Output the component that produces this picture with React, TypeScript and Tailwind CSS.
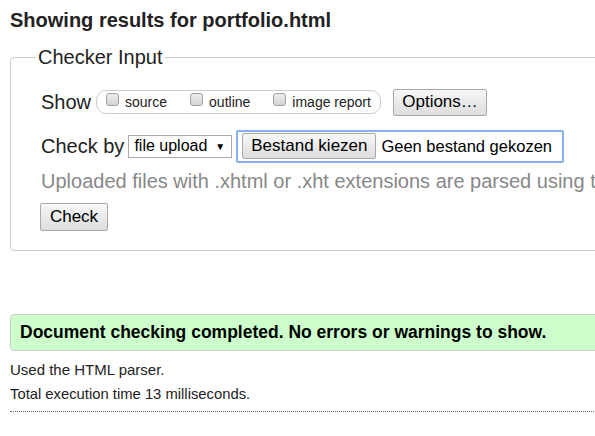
import React from "react";

function Box() {
  return (
    <span className="inline-block w-[13px] h-[13px] rounded-[3px] border border-[#a0a0a0] bg-gradient-to-b from-[#eeeeee] to-[#d4d4d4] mt-[-6px]" />
  );
}

function Btn({ children, cls }: { children: React.ReactNode; cls: string }) {
  return (
    <span
      className={
        "inline-flex items-center justify-center border border-[#a9a9a9] rounded-[2px] bg-gradient-to-b from-[#f8f8f8] to-[#dddddd] text-[17px] text-black " +
        cls
      }
    >
      {children}
    </span>
  );
}

export default function App() {
  return (
    <div
      className="w-[595px] h-[436px] overflow-hidden bg-white text-[#222]"
      style={{ fontFamily: '"Liberation Sans", Arial, sans-serif' }}
    >
      <div className="w-[1000px] pl-[10px]">
        <h2 className="mt-[8px] text-[20px] leading-[24px] font-bold text-[#222]">
          Showing results for portfolio.html
        </h2>
        <fieldset className="mt-[13px] w-[900px] border border-[#cccccc] rounded-[4px]">
          <legend className="ml-[25px] px-[2px] text-[20px] leading-[24px] text-[#222]">
            Checker Input
          </legend>
          <div className="pl-[30px] pt-[16px] pb-[19px]">
            <div className="h-[34px] flex items-center">
              <span className="text-[20px] mr-[5px]">Show</span>
              <span className="h-[24px] w-[285px] border border-[#cccccc] rounded-[10px] flex items-center pl-[9px] text-[14px]">
                <span className="flex items-center">
                  <Box />
                  <span className="ml-[6px] mr-[23px]">source</span>
                </span>
                <span className="flex items-center">
                  <Box />
                  <span className="ml-[6px] mr-[23px]">outline</span>
                </span>
                <span className="flex items-center">
                  <Box />
                  <span className="ml-[6px]">image report</span>
                </span>
              </span>
              <Btn cls="ml-[12px] w-[94px] h-[27px]">Options…</Btn>
            </div>
            <div className="mt-[10px] h-[34px] flex items-center">
              <span className="text-[20px] mr-[4px]">Check by</span>
              <span className="w-[104px] h-[23px] border border-[#a9a9a9] bg-white flex items-center pl-[5px] text-[16px] text-black">
                file upload
                <span className="ml-[8px] text-[10px]">▼</span>
              </span>
              <span className="ml-[4px] w-[328px] h-[33px] border-2 border-[#8ab0f0] rounded-[2px] flex items-center pl-[4px]">
                <Btn cls="w-[134px] h-[26px]">Bestand kiezen</Btn>
                <span className="ml-[5px] text-[16.5px] text-black">Geen bestand gekozen</span>
              </span>
            </div>
            <div className="mt-[6px] text-[20px] leading-[24px] text-[#888888] whitespace-nowrap">
              Uploaded files with .xhtml or .xht extensions are parsed using the XML parser.
            </div>
            <div className="mt-[10px] flex">
              <Btn cls="ml-[-1px] w-[68px] h-[28px]">Check</Btn>
            </div>
          </div>
        </fieldset>
        <div className="mt-[63px] w-[900px] h-[37px] bg-[#ccffcc] border border-[#cccccc] rounded-[4px] flex items-center pl-[9px] text-[17.5px] font-bold text-black">
          Document checking completed. No errors or warnings to show.
        </div>
        <div className="mt-[7px] text-[15px] leading-[24px] text-[#222]">Used the HTML parser.</div>
        <div className="text-[14.8px] leading-[24px] text-[#222]">Total execution time 13 milliseconds.</div>
        <div className="mt-[5px] w-[900px] border-t border-dotted border-[#666666]" />
      </div>
    </div>
  );
}
